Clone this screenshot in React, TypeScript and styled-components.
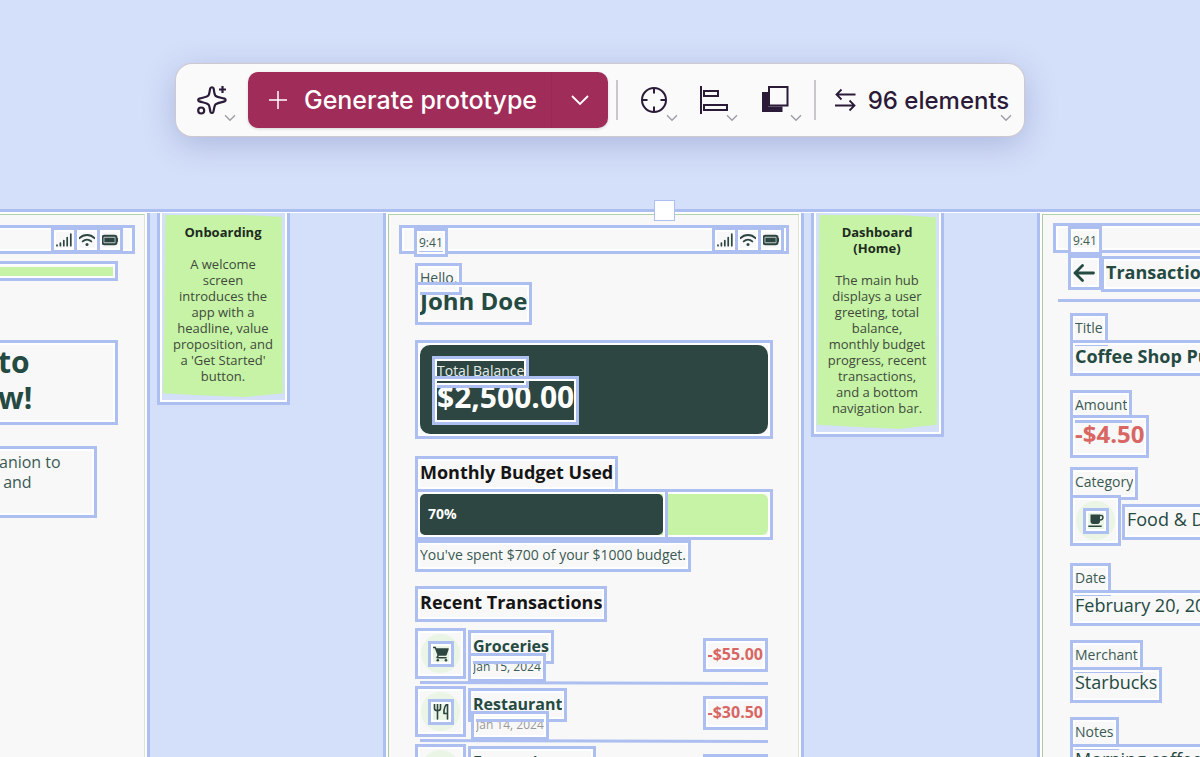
import React from "react";
import styled, { createGlobalStyle, css } from "styled-components";

const BLUE = "#adbff1";
const CANVAS = "#d4dff9";
const PAPER = "#f8f8f8";
const DARK = "#2d4641";
const INK = "#254a42";
const LIME = "#c6f3a6";
const PLUM = "#2b1b38";

const GlobalStyle = createGlobalStyle`
  *, *::before, *::after { box-sizing: border-box; }
  body { margin: 0; background: ${CANVAS}; }
  h1, h2, h3, p, ul { margin: 0; padding: 0; font: inherit; }
  ul { list-style: none; }
`;

const Page = styled.div`
  display: flex;
  flex-direction: column;
  height: 100vh;
  overflow: hidden;
  background: ${CANVAS};
  color: ${INK};
  font-family: "Open Sans", "Noto Sans", sans-serif;
`;

/* ---------- toolbar ---------- */

const ToolbarArea = styled.header`
  display: flex;
  justify-content: center;
  flex: none;
  padding: 64px 0 73px;
`;

const Toolbar = styled.div`
  display: flex;
  align-items: center;
  gap: 8px;
  height: 72px;
  padding: 0 8px;
  border-radius: 16px;
  background: #fafafa;
  box-shadow: 0 0 0 1px #cfc9cf, 0 8px 32px rgba(70, 80, 150, 0.28);
  color: ${PLUM};
`;

const ToolGroup = styled.div`
  display: flex;
  gap: 4px;
`;

const toolbarText = css`
  font-family: Inter, "Liberation Sans", sans-serif;
  font-weight: 500;
  white-space: nowrap;
`;

const ToolButton = styled.button<{ $width: number }>`
  position: relative;
  display: flex;
  align-items: center;
  justify-content: center;
  gap: 12px;
  width: ${(p) => p.$width}px;
  height: 56px;
  padding: 0;
  border: 0;
  background: transparent;
  color: inherit;
  font-size: 24px;
  ${toolbarText}
`;

const CountButton = styled(ToolButton)`
  padding-left: 4px;
`;

const MiniChevron = styled.svg`
  position: absolute;
  right: 4px;
  bottom: 6px;
  color: #a19da6;
`;

const Divider = styled.span`
  width: 2px;
  height: 40px;
  background: #cbc6ca;
`;

const SplitButton = styled.div`
  display: flex;
  height: 56px;
  border-radius: 10px;
  overflow: hidden;
  background: #a02d59;
  box-shadow: 0 1px 3px rgba(0, 0, 0, 0.15);
`;

const PrimaryButton = styled.button<{ $width: number }>`
  display: flex;
  align-items: center;
  justify-content: center;
  gap: 16px;
  width: ${(p) => p.$width}px;
  padding: 0;
  border: 0;
  background: transparent;
  color: #fff;
  font-size: 25px;
  ${toolbarText}
  &:first-child {
    padding-left: 6px;
  }
  & + & {
    border-left: 1px solid #982a54;
  }
`;

/* ---------- selected canvas items ---------- */

/* The selection outline is painted over the item's own content. */
const Frame = styled.div<{ $w?: number; $h?: number; $mt?: number; $ml?: number }>`
  position: relative;
  display: flex;
  align-items: center;
  flex: none;
  width: ${(p) => (p.$w ? `${p.$w}px` : "fit-content")};
  height: ${(p) => (p.$h ? `${p.$h}px` : "auto")};
  margin-top: ${(p) => p.$mt ?? 0}px;
  margin-left: ${(p) => p.$ml ?? 0}px;
  padding: 0 5px;
  white-space: nowrap;
  &::before {
    content: "";
    position: absolute;
    inset: 0;
    z-index: 1;
    border: 3px solid ${BLUE};
    box-shadow: inset 0 0 0 2px #fff;
    pointer-events: none;
  }
`;

const Label = styled(Frame)`
  padding-bottom: 4px;
  font-size: 14px;
  color: #3b5a53;
`;

const Caption = styled(Frame)<{ $muted?: boolean }>`
  padding-bottom: 2px;
  font-size: 12px;
  color: ${(p) => (p.$muted ? "#999" : "#3b5a53")};
`;

const Value = styled(Frame)`
  padding-bottom: 6px;
  font-size: 18px;
`;

const Strong = styled(Frame)<{ $black?: boolean }>`
  padding-bottom: 4px;
  font-size: 18px;
  font-weight: 700;
  color: ${(p) => (p.$black ? "#151515" : INK)};
`;

const ItemName = styled(Frame)`
  padding-bottom: 2px;
  font-size: 16px;
  font-weight: 700;
`;

const Name = styled(Frame)`
  padding-bottom: 6px;
  font-size: 24px;
  font-weight: 700;
`;

const Expense = styled(Frame)<{ $large?: boolean }>`
  font-size: ${(p) => (p.$large ? 24 : 16)}px;
  font-weight: 700;
  padding-bottom: ${(p) => (p.$large ? 6 : 2)}px;
  color: #d86663;
`;

/* ---------- board ---------- */

const Board = styled.main`
  position: relative;
  display: flex;
  flex: 1 1 0;
  align-items: stretch;
  min-height: 0;
  padding-top: 1px;
  border-top: 3px solid ${BLUE};
  box-shadow: inset 0 1px #fff;
`;

const Handle = styled.span`
  position: absolute;
  top: -12px;
  left: calc(50% + 54px);
  z-index: 2;
  width: 21px;
  height: 21px;
  border: 1px solid ${BLUE};
  background: #fff;
`;

const Artboard = styled.section<{ $side?: "left" | "right" }>`
  display: flex;
  flex: ${(p) => (p.$side === "left" ? "1 1 150px" : p.$side === "right" ? "1 1 163px" : "0 0 421px")};
  min-width: 0;
  overflow: hidden;
  padding: 1px ${(p) => (p.$side === "right" ? 0 : 2)}px 0 ${(p) => (p.$side === "left" ? 0 : 2)}px;
  border: solid ${BLUE};
  border-width: 0 ${(p) => (p.$side === "right" ? 0 : 3)}px 0 ${(p) => (p.$side === "left" ? 0 : 3)}px;
  background: #fff;
`;

const Screen = styled.div<{ $side?: "left" | "right" }>`
  display: flex;
  flex-direction: column;
  flex: 1;
  min-width: 0;
  overflow: hidden;
  padding-top: ${(p) => (p.$side === "right" ? 8 : 10)}px;
  border-top: 1px solid #b3d0a8;
  border-left: ${(p) => (p.$side === "left" ? "0" : "1px solid #a9cc9f")};
  border-right: ${(p) => (p.$side === "right" ? "0" : "1px solid #dde6cd")};
  background: ${PAPER};
`;

const StatusBar = styled(Frame)<{ $margin: string }>`
  width: auto;
  align-items: flex-start;
  margin: ${(p) => p.$margin};
  padding: 0;
`;

const Clock = styled(Frame)`
  font-size: 12px;
  color: #3b5a53;
`;

const StatusIcons = styled.div<{ $inset: number }>`
  display: flex;
  margin: 2px ${(p) => p.$inset}px 0 auto;
`;

const IconFrame = styled(Frame)`
  justify-content: center;
  width: 26px;
  height: 26px;
  padding: 0;
  color: ${DARK};
  & + & {
    margin-left: -3px;
  }
`;

const Stack = styled.div<{ $padding: string }>`
  display: flex;
  flex-direction: column;
  flex: none;
  align-items: flex-start;
  padding: ${(p) => p.$padding};
`;

/* onboarding */

const ProgressTrack = styled.div`
  width: 100%;
  height: 9px;
  background: ${LIME};
`;

const OnboardTitle = styled(Frame)`
  align-items: flex-start;
  padding: 4px 0 0 8px;
  font-size: 30px;
  font-weight: 700;
  line-height: 36px;
  white-space: pre;
`;

const OnboardCopy = styled(Frame)`
  align-items: flex-start;
  padding: 6px 0 0 9px;
  font-size: 16px;
  line-height: 20px;
  color: #3b5a53;
  white-space: pre;
`;

/* dashboard */

const CardFrame = styled(Frame)`
  width: 100%;
  align-items: stretch;
  padding: 5px;
`;

const BalanceCard = styled.div`
  flex: 1;
  padding: 11px 12px;
  border-radius: 10px;
  background: ${DARK};
  color: #fff;
`;

const BalanceAmount = styled(Frame)`
  padding-bottom: 8px;
  font-size: 30px;
  font-weight: 700;
  color: #fff;
`;

const BalanceLabel = styled(Label)`
  color: #e4ece8;
`;

const BudgetTrack = styled.div`
  display: flex;
  flex: 1;
  border-radius: 6px;
  background: ${LIME};
`;

const BudgetFill = styled(Frame)`
  margin: -5px 0 -5px -5px;
  padding: 5px;
  align-items: stretch;
`;

const BudgetValue = styled.div`
  display: flex;
  align-items: center;
  flex: 1;
  padding: 0 0 2px 8px;
  border-radius: 5px;
  background: ${DARK};
  color: #fff;
  font-size: 14px;
  font-weight: 700;
`;

const TransactionList = styled.ul`
  width: 100%;
  margin-top: 6px;
`;

const TransactionRow = styled.li`
  height: 58px;
`;

const RowBody = styled.div`
  display: flex;
  align-items: flex-start;
  gap: 2px;
  height: 53px;
`;

const RowEnd = styled.div`
  margin: 10px 5px 0 auto;
`;

const CircleFrame = styled(Frame)`
  justify-content: center;
  width: 51px;
  height: 51px;
  padding: 0;
  background: radial-gradient(circle, #eaf5e6 19px, transparent 20px);
`;

const Rule = styled.div`
  height: 4px;
  margin: 0 5px;
  background: ${BLUE};
  clip-path: polygon(0 0, 100% 25%, 100% 100%, 0 75%);
`;

/* transaction detail */

const DetailHeader = styled.div`
  display: flex;
  flex: none;
  align-items: flex-start;
  padding-left: 25px;
`;

const HeaderRule = styled.div`
  flex: none;
  height: 3px;
  margin: 7px 0 0 15px;
  background: ${BLUE};
`;

const Field = styled.div<{ $height: number }>`
  height: ${(p) => p.$height}px;
`;

const CategoryRow = styled.div`
  display: flex;
  gap: 1px;
  margin-top: -5px;
`;

/* sticky notes */

const NoteSlot = styled.div`
  flex: none;
  width: 233px;
  padding: 0 93px 0 7px;
`;

const NoteFrame = styled.article<{ $h: number }>`
  height: ${(p) => p.$h}px;
  padding: 2px 4px 5px 3px;
  border: solid ${BLUE};
  border-width: 0 3px 3px;
  box-shadow: inset 2px -2px #fff, inset -2px 0 #fff;
`;

const NotePaper = styled.div`
  height: 100%;
  padding-top: 9px;
  background: ${LIME};
  clip-path: polygon(2% 0, 68% 0, 99% 1%, 100% 98%, 84% 99%, 68% 100%, 30% 99%, 0 98%, 1% 60%);
  color: #3f4a3b;
  font-size: 13px;
  line-height: 16px;
  text-align: center;
  white-space: pre-line;
`;

const NoteTitle = styled.h2`
  margin-bottom: 16px;
  font-weight: 700;
  color: #202a1e;
`;

/* ---------- drawings ---------- */

const Chevron = () => (
  <MiniChevron width="12" height="8" viewBox="0 0 12 8" fill="none" stroke="currentColor" strokeWidth="1.4">
    <path d="M1 1.2 6 6.2 11 1.2" />
  </MiniChevron>
);

const SparkleIcon = () => (
  <svg width="30" height="30" viewBox="0 0 30 30" fill="none" stroke="currentColor" strokeWidth="2.2" strokeLinejoin="round">
    <path d="M13.300 3.200c.7-1.300 2.600-1.300 3.200 0 .6 1.600.5 5.300 1.700 7.200 1.500 1.700 5.200 2 9.300 3.200 1.500.6 1.500 2.200 0 2.800-3.900 1.200-7.600 1.400-9.200 3.200-1.400 2-1.200 5.300-2 7.300-.6 1.200-2.200 1.200-2.800 0-.8-2-.5-5.300-1.900-7.200-1.600-1.800-5.100-2.100-9.300-3.300-1.500-.6-1.500-2.200 0-2.800 4.100-1.200 7.700-1.400 9.200-3.200 1.300-1.900 1.100-5.600 1.800-7.200z" />
    <path d="M25.500 1v7M22 4.500h7" />
    <circle cx="4.200" cy="25.500" r="3" />
  </svg>
);

const TargetIcon = () => (
  <svg width="28" height="28" viewBox="0 0 28 28" fill="none" stroke="currentColor" strokeWidth="2">
    <circle cx="14" cy="14" r="12" />
    <path d="M14 2v5.500M14 20.500V26M2 14h5.500M20.500 14H26" />
  </svg>
);

const AlignIcon = () => (
  <svg width="28" height="28" viewBox="0 0 28 28" fill="none" stroke="currentColor" strokeWidth="2">
    <path d="M1 0v28M4 5h14v5H4zM4 19h23v5H4z" />
  </svg>
);

const LayersIcon = () => (
  <svg width="28" height="28" viewBox="0 0 28 28">
    <path d="M0 6h6v14.500h14.500V26H0z" fill="currentColor" />
    <path d="M7 1h18.500v18.500H7z" fill="#fafafa" stroke="currentColor" strokeWidth="2" />
  </svg>
);

const SwapIcon = () => (
  <svg width="21" height="24" viewBox="0 0 21 24" fill="none" stroke="currentColor" strokeWidth="1.800">
    <path d="M20.500 6.500H1.500M6.500 1.500l-5 5 5 5M0 17.500h19.500M14.500 12.500l5 5-5 5" />
  </svg>
);

const SignalIcon = () => (
  <svg width="16" height="14" viewBox="0 0 16 14" stroke="currentColor" strokeWidth="1.700" strokeLinecap="round">
    <path d="M1 12v.7M4.400 10v2.700M7.800 7.500v5.200M11.200 4.500v8.200M14.800 1.200v11.500" />
  </svg>
);

const WifiIcon = () => (
  <svg width="18" height="14" viewBox="0 0 18 14" fill="none" stroke="currentColor" strokeWidth="1.900" strokeLinecap="round">
    <path d="M1.500 5.200c4.200-4.200 10.800-4.200 15 0M4.700 8.400c2.500-2.300 6.100-2.300 8.600 0" />
    <circle cx="9" cy="11.600" r="1.500" fill="currentColor" stroke="none" />
  </svg>
);

const BatteryIcon = () => (
  <svg width="18" height="12" viewBox="0 0 18 12">
    <rect x="1.500" y="1.800" width="14" height="8.400" rx="2" fill="#b9c3c0" stroke="currentColor" strokeWidth="2" />
    <rect x="3.400" y="3.800" width="10.200" height="4.400" fill="currentColor" />
    <path d="M16 3.800c1.800.4 1.800 4 0 4.400z" fill="currentColor" />
  </svg>
);

const CartIcon = () => (
  <svg width="16" height="16" viewBox="0 0 16 16" fill="currentColor">
    <path d="M0 .8h2.700l.7 1.500H15c.6 0 .9.5.7 1l-2 5.700c-.2.500-.6.800-1.200.8H5.800l-.5 1.200h8.300v1.400H4.200c-.7 0-1.100-.6-.8-1.200l1-2.200L1.800 2.300H0z" />
    <circle cx="4.800" cy="14.200" r="1.300" />
    <circle cx="13" cy="14.200" r="1.300" />
  </svg>
);

const CutleryIcon = () => (
  <svg width="16" height="17" viewBox="0 0 16 17" fill="none" stroke="currentColor" strokeWidth="1.600" strokeLinecap="round" strokeLinejoin="round">
    <path d="M1.500 1v4.200c0 3.300 6 3.300 6 0V1M4.500 1v15M14.500 16V1c-2.500.8-3.600 4.500-3.600 9.500h3.600" />
  </svg>
);

const CupIcon = () => (
  <svg width="16" height="14" viewBox="0 0 16 14">
    <path d="M2.500.5H12v7c0 1.500-1 2.500-2.500 2.500H5C3.500 10 2.500 9 2.500 7.500zM.3 11.500h13.400V13H.3z" fill="currentColor" />
    <path d="M12 1.400h1.300c2.400 0 2.400 4.700-1.300 4.700" fill="none" stroke="currentColor" strokeWidth="1.500" />
  </svg>
);

const BackIcon = () => (
  <svg width="22" height="18" viewBox="0 0 22 18" fill="none" stroke="currentColor" strokeWidth="2.800" strokeLinecap="round" strokeLinejoin="round">
    <path d="M20.500 9H2M9.500 1.500 2 9l7.500 7.500" />
  </svg>
);

const PhoneStatus = ({ inset }: { inset: number }) => (
  <StatusIcons $inset={inset}>
    <IconFrame><SignalIcon /></IconFrame>
    <IconFrame><WifiIcon /></IconFrame>
    <IconFrame><BatteryIcon /></IconFrame>
  </StatusIcons>
);

type Transaction = { name: string; date?: string; muted?: boolean; amount: string; icon: React.ReactNode };

const transactions: Transaction[] = [
  { name: "Groceries", date: "Jan 15, 2024", amount: "-$55.00", icon: <CartIcon /> },
  { name: "Restaurant", date: "Jan 14, 2024", muted: true, amount: "-$30.50", icon: <CutleryIcon /> },
  { name: "Entertainment", amount: "-$20.00", icon: <CupIcon /> },
];

export default function App() {
  return (
    <Page>
      <GlobalStyle />
      <ToolbarArea>
        <Toolbar role="toolbar">
          <ToolButton $width={56} aria-label="AI actions"><SparkleIcon /><Chevron /></ToolButton>
          <SplitButton>
            <PrimaryButton $width={303}>
              <svg width="20" height="20" viewBox="0 0 20 20" stroke="currentColor" strokeWidth="1.500">
                <path d="M10 1v18M1 10h18" />
              </svg>
              Generate prototype
            </PrimaryButton>
            <PrimaryButton $width={57} aria-label="More options">
              <svg width="18" height="10" viewBox="0 0 18 10" fill="none" stroke="currentColor" strokeWidth="1.800">
                <path d="M1 1l8 8 8-8" />
              </svg>
            </PrimaryButton>
          </SplitButton>
          <Divider />
          <ToolGroup>
            <ToolButton $width={56} aria-label="Focus"><TargetIcon /><Chevron /></ToolButton>
            <ToolButton $width={56} aria-label="Align"><AlignIcon /><Chevron /></ToolButton>
            <ToolButton $width={60} aria-label="Layer order"><LayersIcon /><Chevron /></ToolButton>
          </ToolGroup>
          <Divider />
          <CountButton $width={192}><SwapIcon />96 elements<Chevron /></CountButton>
        </Toolbar>
      </ToolbarArea>

      <Board>
        <Handle />

        <Artboard $side="left">
          <Screen $side="left">
            <StatusBar $h={29} $margin="0 9px 0 -10px"><PhoneStatus inset={12} /></StatusBar>
            <Stack $padding="0 26px 0 0">
              <Frame $w={128} $h={20} $mt={7} $ml={-10}><ProgressTrack /></Frame>
              <OnboardTitle as="h1" $w={128} $h={85} $mt={59} $ml={-10}>{"to\nw!"}</OnboardTitle>
              <OnboardCopy as="p" $w={107} $h={72} $mt={21} $ml={-10}>{"anion to\n and"}</OnboardCopy>
            </Stack>
          </Screen>
        </Artboard>

        <NoteSlot>
          <NoteFrame $h={192}>
            <NotePaper>
              <NoteTitle>Onboarding</NoteTitle>
              <p>{"A welcome\nscreen\nintroduces the\napp with a\nheadline, value\nproposition, and\na 'Get Started'\nbutton."}</p>
            </NotePaper>
          </NoteFrame>
        </NoteSlot>

        <Artboard>
          <Screen>
            <StatusBar $h={29} $margin="0 9px 0 10px">
              <Clock $w={34} $h={29} $mt={3} $ml={15}>9:41</Clock>
              <PhoneStatus inset={5} />
            </StatusBar>
            <Stack $padding="0 25px 0 26px">
              <Label $h={32} $mt={9}>Hello,</Label>
              <Name as="h1" $h={43} $mt={-13}>John Doe</Name>
              <CardFrame $h={99} $mt={15}>
                <BalanceCard>
                  <BalanceLabel $h={32}>Total Balance</BalanceLabel>
                  <BalanceAmount $h={49} $mt={-12}>$2,500.00</BalanceAmount>
                </BalanceCard>
              </CardFrame>
              <Strong as="h2" $black $h={36} $mt={17}>Monthly Budget Used</Strong>
              <CardFrame $h={51} $mt={-3}>
                <BudgetTrack>
                  <BudgetFill $w={253}>
                    <BudgetValue>70%</BudgetValue>
                  </BudgetFill>
                </BudgetTrack>
              </CardFrame>
              <Label $h={32}>You've spent $700 of your $1000 budget.</Label>
              <Strong as="h2" $black $h={36} $mt={14}>Recent Transactions</Strong>
              <TransactionList>
                {transactions.map((t) => (
                  <TransactionRow key={t.name}>
                    <RowBody>
                      <CircleFrame><IconFrame>{t.icon}</IconFrame></CircleFrame>
                      <div>
                        <ItemName as="h3" $h={34} $mt={2}>{t.name}</ItemName>
                        {t.date && <Caption $muted={t.muted} $h={29} $mt={-11} $ml={t.muted ? 3 : 0}>{t.date}</Caption>}
                      </div>
                      <RowEnd><Expense $h={34}>{t.amount}</Expense></RowEnd>
                    </RowBody>
                    <Rule />
                  </TransactionRow>
                ))}
              </TransactionList>
            </Stack>
          </Screen>
        </Artboard>

        <NoteSlot>
          <NoteFrame $h={224}>
            <NotePaper>
              <NoteTitle>{"Dashboard\n(Home)"}</NoteTitle>
              <p>{"The main hub\ndisplays a user\ngreeting, total\nbalance,\nmonthly budget\nprogress, recent\ntransactions,\nand a bottom\nnavigation bar."}</p>
            </NotePaper>
          </NoteFrame>
        </NoteSlot>

        <Artboard $side="right">
          <Screen $side="right">
            <StatusBar $h={30} $margin="0 -10px 0 10px">
              <Clock $w={34} $h={29} $mt={3} $ml={15}>9:41</Clock>
            </StatusBar>
            <DetailHeader>
              <Frame $w={34} $h={35} $mt={2}><BackIcon /></Frame>
              <Strong as="h1" $h={36} $mt={3} $ml={-1}>Transaction Details</Strong>
            </DetailHeader>
            <HeaderRule />
            <Stack $padding="11px 0 0 27px">
              <Field $height={77}>
                <Label $h={33}>Title</Label>
                <Strong $h={36} $mt={-6}>Coffee Shop Purchase</Strong>
              </Field>
              <Field $height={77}>
                <Label $h={33}>Amount</Label>
                <Expense $large $h={43} $mt={-8}>-$4.50</Expense>
              </Field>
              <Field $height={96}>
                <Label $h={33}>Category</Label>
                <CategoryRow>
                  <CircleFrame><IconFrame><CupIcon /></IconFrame></CircleFrame>
                  <Value $h={36} $mt={9}>Food &amp; Drink</Value>
                </CategoryRow>
              </Field>
              <Field $height={77}>
                <Label $h={33}>Date</Label>
                <Value $h={36} $mt={-6}>February 20, 2024</Value>
              </Field>
              <Field $height={77}>
                <Label $h={33}>Merchant</Label>
                <Value $h={36} $mt={-6}>Starbucks</Value>
              </Field>
              <Field $height={77}>
                <Label $h={33}>Notes</Label>
                <Value $h={36} $mt={-6}>Morning coffee</Value>
              </Field>
            </Stack>
          </Screen>
        </Artboard>
      </Board>
    </Page>
  );
}
